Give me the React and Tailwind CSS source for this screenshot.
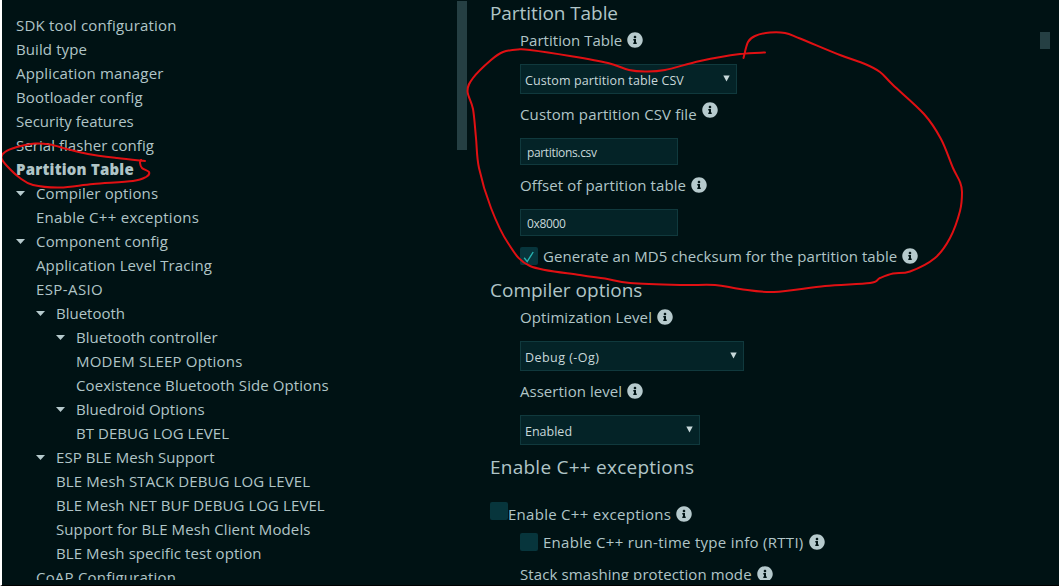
import { FaInfoCircle } from "react-icons/fa";

const TREE = [
  { label: "SDK tool configuration", pad: "pl-[14px]", fit: "tracking-[0.18px]" },
  { label: "Build type", pad: "pl-[14px]", fit: "tracking-[0.1px]" },
  { label: "Application manager", pad: "pl-[14px]", fit: "tracking-[0.15px]" },
  { label: "Bootloader config", pad: "pl-[14px]", fit: "tracking-[0.15px]" },
  { label: "Security features", pad: "pl-[14px]", fit: "tracking-normal" },
  { label: "Serial flasher config", pad: "pl-[14px]", fit: "tracking-[0.05px]" },
  { label: "Partition Table", pad: "pl-[14px]", fit: "tracking-[0.2px] font-extrabold" },
  { label: "Compiler options", pad: "pl-[14px]", fit: "tracking-[0.12px]", open: true },
  { label: "Enable C++ exceptions", pad: "pl-[34px]", fit: "tracking-[0.28px]" },
  { label: "Component config", pad: "pl-[14px]", fit: "tracking-[0.19px]", open: true },
  { label: "Application Level Tracing", pad: "pl-[34px]", fit: "tracking-[0.12px]" },
  { label: "ESP-ASIO", pad: "pl-[34px]", fit: "tracking-[0.4px]" },
  { label: "Bluetooth", pad: "pl-[34px]", fit: "tracking-normal", open: true },
  { label: "Bluetooth controller", pad: "pl-[54px]", fit: "tracking-[0.03px]", open: true },
  { label: "MODEM SLEEP Options", pad: "pl-[74px]", fit: "tracking-[0.2px]" },
  { label: "Coexistence Bluetooth Side Options", pad: "pl-[74px]", fit: "tracking-[0.08px]" },
  { label: "Bluedroid Options", pad: "pl-[54px]", fit: "tracking-[0.06px]", open: true },
  { label: "BT DEBUG LOG LEVEL", pad: "pl-[74px]", fit: "tracking-[0.06px]" },
  { label: "ESP BLE Mesh Support", pad: "pl-[34px]", fit: "tracking-[0.05px]", open: true },
  { label: "BLE Mesh STACK DEBUG LOG LEVEL", pad: "pl-[54px]", fit: "tracking-[0.12px]" },
  { label: "BLE Mesh NET BUF DEBUG LOG LEVEL", pad: "pl-[54px]", fit: "tracking-[0.08px]" },
  { label: "Support for BLE Mesh Client Models", pad: "pl-[54px]", fit: "tracking-[0.1px]" },
  { label: "BLE Mesh specific test option", pad: "pl-[54px]", fit: "tracking-[0.08px]" },
  { label: "CoAP Configuration", pad: "pl-[34px]", fit: "tracking-[0.2px]" },
];

const SMALL_LOOP = [
  [145, 161], [117, 158], [88, 154], [67, 149], [50, 144.5], [35, 143.5], [17, 147], [5, 152], [1.5, 158],
  [7, 166], [20, 178], [33, 185], [60, 187.5], [93, 184], [133, 181], [146, 177], [149, 172],
  [142, 168], [140, 163], [141, 160],
];

const BIG_LOOP = [
  [765, 52.5], [740, 54], [700, 61], [665, 70], [645, 71.5], [629, 70], [608, 63], [570, 56], [530, 50],
  [518, 49.5], [503, 52], [491, 60], [473, 78], [467.5, 91], [473, 109], [476, 138], [479, 168], [491, 208],
  [508, 243], [530, 266], [580, 275], [605, 278.5], [630, 283], [680, 285], [715, 285], [740, 289],
  [774, 292], [825, 286], [870, 283], [880, 278], [893, 273.5], [910, 271.5], [935, 258], [950, 238],
  [960, 211], [962, 192], [960, 182], [953, 168], [941, 139], [924, 114], [893, 85], [880, 72],
  [865, 64], [840, 55], [800, 38.5], [785, 33], [770, 32.5], [755, 36], [748, 42], [743.5, 58],
];

// Catmull-Rom spline through the points, as cubic segments.
function spline(p) {
  let d = `M${p[0][0]} ${p[0][1]}`;
  for (let i = 0; i < p.length - 1; i++) {
    const a = p[i - 1] || p[i];
    const b = p[i];
    const c = p[i + 1];
    const e = p[i + 2] || c;
    d += ` C${b[0] + (c[0] - a[0]) / 6} ${b[1] + (c[1] - a[1]) / 6} ${c[0] - (e[0] - b[0]) / 6} ${c[1] - (e[1] - b[1]) / 6} ${c[0]} ${c[1]}`;
  }
  return d;
}

function Info({ className = "" }) {
  return <FaInfoCircle className={`size-4 shrink-0 text-[#b6cacd] ${className}`} />;
}

function Heading({ children, className = "" }) {
  return <h2 className={`h-[27px] text-[19px] leading-[27px] ${className}`}>{children}</h2>;
}

function Label({ children, className = "", fit = "tracking-[0.07px]", icon = "" }) {
  return (
    <div className={`flex h-6 items-center gap-[5px] leading-6 ${className}`}>
      <span className={fit}>{children}</span>
      <Info className={icon} />
    </div>
  );
}

function Select({ children, className }) {
  return (
    <div className={`ml-[30px] flex h-[30px] items-center justify-between border border-[#10393d] bg-[#042327] pr-[6px] pl-1 text-[12.5px] text-[#c8d8da] ${className}`}>
      <span className="mt-[5px]">{children}</span>
      <svg className="mb-px h-[7px] w-[7px]" viewBox="0 0 7 7">
        <path d="M0.3 0.5H6.7L3.5 6.5Z" fill="currentColor" />
      </svg>
    </div>
  );
}

function Input({ children, className }) {
  return (
    <div className={`ml-[30px] flex h-[27px] w-[158px] items-center border border-[#10393d] bg-[#042327] pt-[3px] pl-[6px] text-[12px] tracking-[-0.35px] text-[#c8d8da] ${className}`}>
      {children}
    </div>
  );
}

function Box({ checked, className = "" }) {
  return (
    <span className={`flex size-[18px] shrink-0 items-center justify-center rounded-xs bg-[#07353c] ${className}`}>
      {checked && (
        <svg className="size-[18px]" viewBox="0 0 18 18" fill="none" stroke="#27b3b0" strokeWidth="1.4">
          <path d="M4.2 10.8L7.2 14.6L13.2 5" />
        </svg>
      )}
    </span>
  );
}

export default function App() {
  return (
    <div className="relative h-[586px] w-[1059px] overflow-hidden border-b border-l-2 border-b-black border-l-white bg-[#001214] font-['Open_Sans','Noto_Sans',sans-serif] text-[15px] whitespace-nowrap text-[#b0c5c7]">
      <div className="flex h-[580px] overflow-hidden">
        <nav className="w-[455px] shrink-0 pt-[13px]">
          {TREE.map((n) => (
            <div key={n.label} className={`flex h-6 items-center leading-6 ${n.pad}`}>
              {n.open && (
                <svg className="mr-[11px] h-[5px] w-[9px] shrink-0 text-[#b6cacd]" viewBox="0 0 9 5">
                  <path d="M0 0H9L4.5 5Z" fill="currentColor" />
                </svg>
              )}
              <span className={n.fit}>{n.label}</span>
            </div>
          ))}
        </nav>
        <div className="mt-px h-[149px] w-[10px] shrink-0 bg-[#253f43]" />
        <main className="ml-[23px] flex-1">
          <Heading className="tracking-[-0.07px]">Partition Table</Heading>
          <Label className="mt-px ml-[30px]" fit="tracking-[0.03px]">Partition Table</Label>
          <Select className="mt-3 w-[217px] tracking-[0.1px]">Custom partition table CSV</Select>
          <Label className="mt-2 ml-[30px]" fit="tracking-[0.13px]" icon="mb-2">Custom partition CSV file</Label>
          <Input className="mt-3">partitions.csv</Input>
          <Label className="mt-2 ml-[30px]" fit="tracking-[0.1px]">Offset of partition table</Label>
          <Input className="mt-3">0x8000</Input>
          <div className="mt-2 ml-[30px] flex items-center gap-[5px]">
            <Box checked />
            <Label fit="tracking-[0.06px]">Generate an MD5 checksum for the partition table</Label>
          </div>
          <Heading className="mt-[9px]">Compiler options</Heading>
          <Label className="mt-px ml-[30px]" fit="tracking-[0.1px]">Optimization Level</Label>
          <Select className="mt-3 w-[224px] tracking-[0.45px]">Debug (-Og)</Select>
          <Label className="mt-2 ml-[30px]" fit="tracking-[0.03px]">Assertion level</Label>
          <Select className="mt-3 w-[180px]">Enabled</Select>
          <Heading className="mt-[9px] tracking-[0.24px]">Enable C++ exceptions</Heading>
          <div className="mt-[21px] flex items-center">
            <Box className="mb-[6px]" />
            <Label fit="tracking-[0.28px]">Enable C++ exceptions</Label>
          </div>
          <div className="mt-1 ml-[30px] flex items-center gap-[5px]">
            <Box />
            <Label fit="tracking-[0.28px]">Enable C++ run-time type info (RTTI)</Label>
          </div>
          <Label className="mt-2 ml-[30px]" fit="tracking-[0.1px]">Stack smashing protection mode</Label>
        </main>
        <div className="mt-8 mr-[9px] h-[17px] w-[10px] shrink-0 bg-[#253f43]" />
      </div>
      <svg className="absolute top-0 -left-[2px] h-[586px] w-[1059px]" viewBox="0 0 1059 586" fill="none" stroke="#e01013" strokeWidth="2" strokeLinecap="round">
        <path d={spline(SMALL_LOOP)} />
        <path d={spline(BIG_LOOP)} />
      </svg>
    </div>
  );
}
